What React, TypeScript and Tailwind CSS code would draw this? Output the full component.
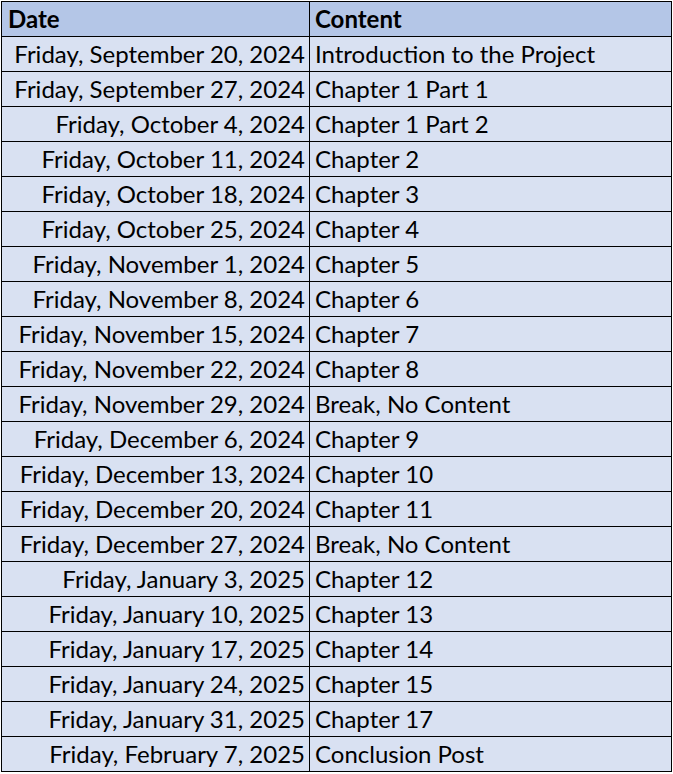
const rows = [
  ['Friday, September 20, 2024', 'Introduction to the Project'],
  ['Friday, September 27, 2024', 'Chapter 1 Part 1'],
  ['Friday, October 4, 2024', 'Chapter 1 Part 2'],
  ['Friday, October 11, 2024', 'Chapter 2'],
  ['Friday, October 18, 2024', 'Chapter 3'],
  ['Friday, October 25, 2024', 'Chapter 4'],
  ['Friday, November 1, 2024', 'Chapter 5'],
  ['Friday, November 8, 2024', 'Chapter 6'],
  ['Friday, November 15, 2024', 'Chapter 7'],
  ['Friday, November 22, 2024', 'Chapter 8'],
  ['Friday, November 29, 2024', 'Break, No Content'],
  ['Friday, December 6, 2024', 'Chapter 9'],
  ['Friday, December 13, 2024', 'Chapter 10'],
  ['Friday, December 20, 2024', 'Chapter 11'],
  ['Friday, December 27, 2024', 'Break, No Content'],
  ['Friday, January 3, 2025', 'Chapter 12'],
  ['Friday, January 10, 2025', 'Chapter 13'],
  ['Friday, January 17, 2025', 'Chapter 14'],
  ['Friday, January 24, 2025', 'Chapter 15'],
  ['Friday, January 31, 2025', 'Chapter 17'],
  ['Friday, February 7, 2025', 'Conclusion Post'],
]

export default function App() {
  return (
    <div className="min-h-screen bg-white pl-px pt-px font-['Lato',sans-serif] text-[24px] leading-none text-black">
      <div className="w-[671px] border-l border-t border-black">
        <div className="flex h-[35px] border-b border-black bg-[#b4c6e7] font-bold">
          <div className="flex w-[308px] items-center border-r border-black pl-[6px]">Date</div>
          <div className="flex w-[362px] items-center border-r border-black pl-[5px]">Content</div>
        </div>
        {rows.map(([date, content]) => (
          <div key={date} className="flex h-[35px] border-b border-black bg-[#d9e1f2]">
            <div className="flex w-[308px] items-center justify-end whitespace-nowrap border-r border-black pr-[4px]">{date}</div>
            <div className="flex w-[362px] items-center whitespace-nowrap border-r border-black pl-[5px]">{content}</div>
          </div>
        ))}
      </div>
    </div>
  )
}
